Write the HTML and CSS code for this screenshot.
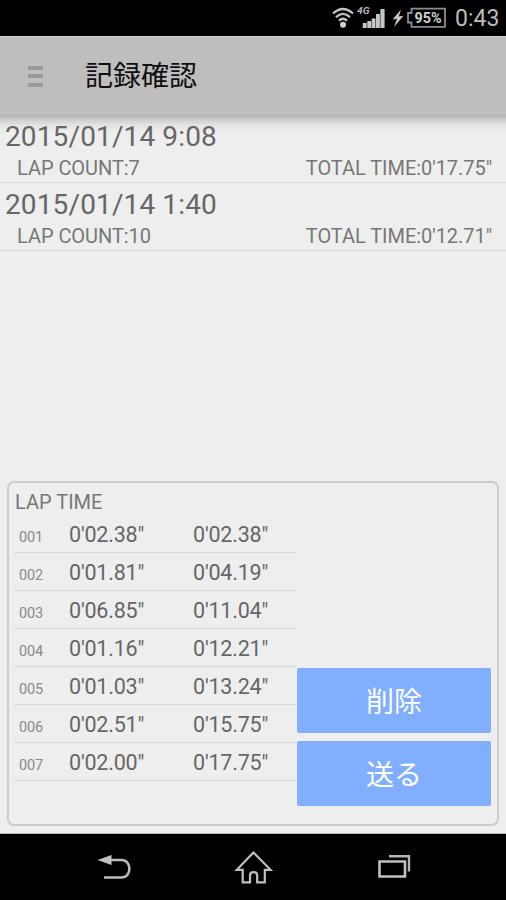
FILE: index.html
```html
<!DOCTYPE html>
<html lang="ja">
<head>
<meta charset="utf-8">
<title>記録確認</title>
<link rel="stylesheet" href="styles.css">
</head>
<body>
<div class="status">
  <svg class="status-icons" width="116" height="36" viewBox="332 0 116 36">
    <g fill="none" stroke="#c6c6c6" stroke-width="2.3">
      <path d="M333 13.5Q343 4.5 353 13.5"/>
      <path d="M336 17.2Q343 10.5 350 17.2"/>
      <path d="M339 20.7Q343 16.7 347 20.7"/>
    </g>
    <circle cx="343" cy="24.7" r="3" fill="#d0d0d0"/>
    <text class="net" x="357" y="13.5" textLength="12.5" lengthAdjust="spacingAndGlyphs">4G</text>
    <g fill="#c6c6c6">
      <path d="M362.7 23h4v5h-4zM367.3 21h3.8v7h-3.8zM371.6 18.5h3.9v9.5h-3.9zM376 14h3.9v14h-3.9zM380.4 9h4.2v19h-4.2z"/>
      <path d="M401 9.5L392.5 19.5L397 18.8L394 27L403.5 15.8L398.8 16.6Z"/>
    </g>
    <path d="M411.5 8.7H445V26.8H411.5V22.5H408V13H411.5Z" fill="none" stroke="#8d8d8d" stroke-width="1.8"/>
    <text class="charge" x="414.5" y="23" textLength="27" lengthAdjust="spacingAndGlyphs">95%</text>
  </svg>
  <span class="clock">0:43</span>
</div>
<header class="header">
  <div class="menu"><i></i><i></i><i></i></div>
  <h1>記録確認</h1>
</header>
<main class="content">
  <div class="records">
    <div class="record">
      <div class="date">2015/01/14 9:08</div>
      <div class="meta"><span>LAP COUNT:7</span><span class="total">TOTAL TIME:0'17.75"</span></div>
    </div>
    <div class="record">
      <div class="date">2015/01/14 1:40</div>
      <div class="meta"><span>LAP COUNT:10</span><span class="total">TOTAL TIME:0'12.71"</span></div>
    </div>
  </div>
  <section class="panel">
    <div class="laps">
      <h2>LAP TIME</h2>
      <div class="lap"><small>001</small><span>0'02.38"</span><span>0'02.38"</span></div>
      <div class="lap"><small>002</small><span>0'01.81"</span><span>0'04.19"</span></div>
      <div class="lap"><small>003</small><span>0'06.85"</span><span>0'11.04"</span></div>
      <div class="lap"><small>004</small><span>0'01.16"</span><span>0'12.21"</span></div>
      <div class="lap"><small>005</small><span>0'01.03"</span><span>0'13.24"</span></div>
      <div class="lap"><small>006</small><span>0'02.51"</span><span>0'15.75"</span></div>
      <div class="lap"><small>007</small><span>0'02.00"</span><span>0'17.75"</span></div>
    </div>
    <div class="actions">
      <button>削除</button>
      <button>送る</button>
    </div>
  </section>
</main>
<nav class="nav">
  <svg width="506" height="66" viewBox="0 834 506 66">
    <path d="M109 860H121.5C132 860 132 877.5 121.5 877.5H104" fill="none" stroke="#bcbcbc" stroke-width="2.6"/>
    <path d="M97.5 860L111.5 855V865Z" fill="#c4c4c4"/>
    <path d="M253.5 852.5L236.8 869.8H242.7V882.3H250V875.5C250 871 257.2 871 257.2 875.5V882.3H264.8V869.8H270.5Z" fill="none" stroke="#c0c0c0" stroke-width="2.2"/>
    <path d="M379.5 861.5H405V876.5H379.5Z" fill="none" stroke="#c0c0c0" stroke-width="2.6"/>
    <path d="M389 856.3H409V871.5" fill="none" stroke="#b4b4b4" stroke-width="2.4"/>
  </svg>
</nav>
</body>
</html>
```
FILE: styles.css
```css
* { box-sizing: border-box; }
body {
  margin: 0;
  width: 506px;
  height: 900px;
  display: flex;
  flex-direction: column;
  overflow: hidden;
  background: #eee;
  color: #666;
  font-family: Roboto, "Noto Sans CJK JP", sans-serif;
}
.status {
  flex: none;
  height: 36px;
  background: #000;
  display: flex;
  justify-content: flex-end;
  align-items: center;
  gap: 7px;
  padding-right: 7px;
}
.net { font: italic bold 9px Roboto, sans-serif; fill: #b8b8b8; }
.charge { font: bold 14.5px Roboto, sans-serif; fill: #d0d0d0; }
.clock {
  width: 44px;
  color: #bcbcbc;
  font-size: 23px;
  line-height: 36px;
  white-space: nowrap;
  padding-top: 1px;
}
.header {
  flex: none;
  height: 79px;
  background: #bebebe;
  border-top: 1px solid #cdcdcd;
  display: flex;
  align-items: center;
  padding-left: 28px;
}
.menu { width: 15px; display: flex; flex-direction: column; gap: 4.5px; }
.menu i { height: 4px; background: #999; }
.header h1 {
  margin: 2px 0 0 42px;
  font-size: 28px;
  line-height: 40px;
  font-weight: 400;
  color: #101010;
}
.content {
  flex: 1;
  display: flex;
  flex-direction: column;
  justify-content: space-between;
  padding-bottom: 7px;
  border-bottom: 1px solid #bbb;
  background: linear-gradient(#b0b0b0, #cfcfcf 5px, #e3e3e3 10px, #eee 17px);
}
.record {
  height: 68px;
  border-bottom: 1px solid #dadada;
}
.date {
  font-size: 28px;
  line-height: 34px;
  padding: 5px 0 0 5px;
  letter-spacing: 0.13px;
  white-space: nowrap;
}
.meta {
  display: flex;
  justify-content: space-between;
  padding: 1px 14px 0 17px;
  font-size: 20px;
  line-height: 26px;
  letter-spacing: -0.05px;
  color: #777;
}
.panel {
  width: 492px;
  height: 345px;
  margin-left: 7px;
  border: 2px solid #ccc;
  border-radius: 7px;
  display: flex;
  padding: 0 6px 0 5px;
}
.laps { width: 282px; padding-top: 6px; }
.laps h2 {
  margin: 0;
  padding-left: 1px;
  font-size: 20px;
  line-height: 26px;
  height: 26px;
  font-weight: 400;
  color: #777;
}
.lap {
  display: grid;
  grid-template-columns: 55px 124px 1fr;
  align-items: baseline;
  height: 38px;
  border-bottom: 1px solid #d9d9d9;
  font-size: 21.5px;
  letter-spacing: -0.2px;
  line-height: 39px;
  white-space: nowrap;
}
.lap small { font-size: 14.5px; padding-left: 5px; color: #8a8a8a; }
.actions {
  flex: 1;
  display: flex;
  flex-direction: column;
  justify-content: flex-end;
  gap: 8px;
  padding: 0 0 18px 1px;
}
.actions button {
  height: 65px;
  border: 0;
  border-radius: 2px;
  background: #81aeff;
  color: #fff;
  font: 400 28px/65px Roboto, "Noto Sans CJK JP", sans-serif;
  padding: 2px 0 0;
}
.nav { flex: none; height: 66px; background: #000; }
.nav svg { display: block; }
```
